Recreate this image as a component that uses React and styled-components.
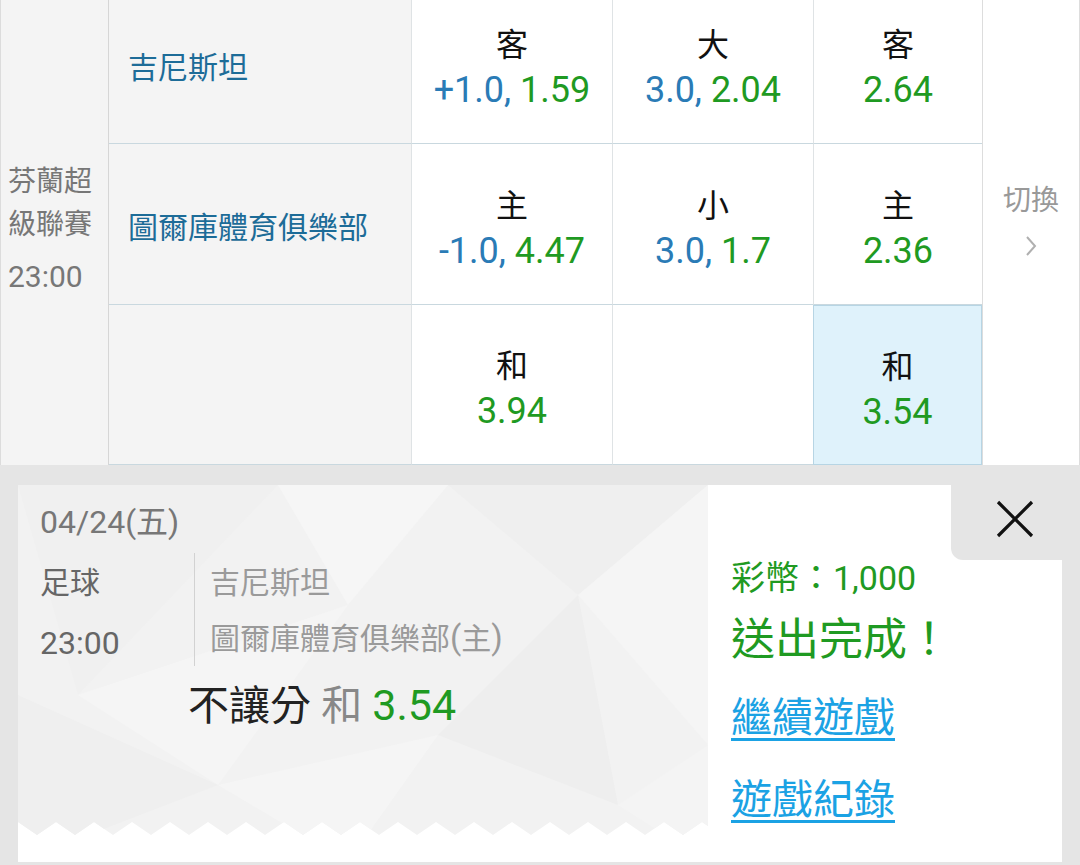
import styled, { createGlobalStyle } from 'styled-components';

const GlobalStyle = createGlobalStyle`
  html, body {
    margin: 0;
    padding: 0;
    background: #ffffff;
  }
  body {
    font-family: Roboto, "Noto Sans CJK TC", sans-serif;
  }
`;

const GREEN = '#1f9a22';
const HANDICAP_BLUE = '#2a7bb6';

const Screen = styled.div`
  display: flex;
  flex-direction: column;
  width: 1080px;
  height: 865px;
  overflow: hidden;
  background: #e5e5e5;
`;

// match list, scrolled a little so the first row is cut at the top
const Board = styled.div`
  height: 465px;
  flex-shrink: 0;
  overflow: hidden;
  background: #ffffff;
`;

const MatchRow = styled.div`
  display: flex;
  height: 481px;
  margin-top: -16px;
`;

const LeagueCol = styled.div`
  width: 109px;
  box-sizing: border-box;
  display: flex;
  flex-direction: column;
  justify-content: center;
  padding: 8px 0 0 7px;
  background: #f4f4f4;
  border-left: 1px solid #dcdcdc;
  border-right: 1px solid #d6d6d6;
  color: #777777;
  font-size: 28px;
`;

const LeagueLine = styled.div`
  line-height: 43px;
  margin-top: ${(p) => (p.$gap ? '9px' : '0')};
  font-size: ${(p) => (p.$gap ? '30px' : '28px')};
`;

const OddsGrid = styled.div`
  display: grid;
  grid-template-columns: 302px 201px 201px 169px;
  grid-template-rows: 160px 161px 160px;
`;

const TeamCell = styled.div`
  box-sizing: border-box;
  display: flex;
  align-items: center;
  padding: 2px 0 0 19px;
  background: #f4f4f4;
  border-bottom: 1px solid #c9d8df;
  color: #1d6c98;
  font-size: 30px;
`;

const OddsCell = styled.div`
  box-sizing: border-box;
  display: flex;
  flex-direction: column;
  align-items: center;
  justify-content: center;
  padding-top: 9px;
  background: ${(p) => (p.$picked ? '#dff2fb' : '#ffffff')};
  border-left: 1px solid ${(p) => (p.$picked ? '#b7d5e4' : '#dfe3e5')};
  border-right: ${(p) => (p.$picked ? '1px solid #b7d5e4' : 'none')};
  border-top: ${(p) => (p.$picked ? '1px solid #b7d5e4' : 'none')};
  border-bottom: 1px solid ${(p) => (p.$picked ? '#b7d5e4' : '#c9d8df')};
`;

const OddsLabel = styled.div`
  line-height: 44px;
  font-size: 32px;
  color: #111111;
`;

const OddsValue = styled.div`
  line-height: 46px;
  font-size: 36px;
  color: ${GREEN};
`;

const Handicap = styled.span`
  color: ${HANDICAP_BLUE};
`;

const SwitchCol = styled.div`
  flex: 1;
  box-sizing: border-box;
  display: flex;
  flex-direction: column;
  align-items: center;
  justify-content: center;
  padding-bottom: 12px;
  border-left: 1px solid #dddddd;
  border-right: 1px solid #dddddd;
  color: #999999;
  font-size: 28px;
`;

const SwitchText = styled.div`
  line-height: 40px;
`;

const Chevron = styled.svg`
  margin-top: 14px;
`;

// confirmation panel
const Footer = styled.div`
  flex: 1;
  display: flex;
  padding: 20px 18px 0 18px;
`;

const Slip = styled.div`
  display: flex;
  width: 100%;
  height: 377px;
`;

const SlipInfo = styled.div`
  position: relative;
  width: 690px;
  flex-shrink: 0;
  background: #ffffff;
`;

const SlipPattern = styled.svg`
  position: absolute;
  inset: 0;
`;

const SlipBody = styled.div`
  position: relative;
  padding: 17px 0 0 22px;
`;

const DateLine = styled.div`
  font-size: 32px;
  line-height: 40px;
  color: #777777;
`;

const InfoRow = styled.div`
  display: flex;
  margin-top: 11px;
`;

const SportCol = styled.div`
  width: 154px;
  color: #666666;
  font-size: 30px;
  line-height: 60px;
`;

const Clock = styled.div`
  font-size: 32px;
`;

const TeamsCol = styled.div`
  align-self: flex-start;
  padding: 2px 0 0 15px;
  border-left: 1px solid #d2d2d2;
  color: #9a9a9a;
  font-size: 30px;
  line-height: 55px;
`;

const Paren = styled.span`
  font-size: 33px;
`;

const BetLine = styled.div`
  margin: 7px 0 0 148px;
  font-size: 41px;
  line-height: 50px;
  color: #222222;
`;

const BetPart = styled.span`
  color: ${(p) => p.$color};
  font-size: ${(p) => p.$size || 'inherit'};
`;

const SlipActions = styled.div`
  flex: 1;
  display: flex;
  flex-direction: column;
  background: #ffffff;
`;

const TabRow = styled.div`
  display: flex;
  justify-content: flex-end;
`;

const CloseTab = styled.div`
  width: 111px;
  height: 75px;
  box-sizing: border-box;
  display: flex;
  align-items: center;
  justify-content: center;
  padding: 0 0 7px 17px;
  background: #e5e5e5;
  border-bottom-left-radius: 12px;
`;

const ActionBody = styled.div`
  padding-left: 23px;
`;

const Coins = styled.div`
  font-size: 34px;
  line-height: 36px;
  color: ${GREEN};
`;

const Done = styled.div`
  margin-top: 16px;
  font-size: 44px;
  line-height: 56px;
  color: ${GREEN};
`;

const ActionLink = styled.a`
  display: block;
  margin-top: ${(p) => p.$top}px;
  font-size: 41px;
  line-height: 56px;
  color: #1ba2e4;
  text-decoration: underline;
  text-decoration-thickness: 3px;
  text-underline-offset: 6px;
  cursor: pointer;
`;

const rows = [
  {
    team: '吉尼斯坦',
    cells: [
      { label: '客', line: '+1.0,', odds: '1.59' },
      { label: '大', line: '3.0,', odds: '2.04' },
      { label: '客', odds: '2.64' },
    ],
  },
  {
    team: '圖爾庫體育俱樂部',
    cells: [
      { label: '主', line: '-1.0,', odds: '4.47' },
      { label: '小', line: '3.0,', odds: '1.7' },
      { label: '主', odds: '2.36' },
    ],
  },
  {
    team: '',
    cells: [{ label: '和', odds: '3.94' }, null, { label: '和', odds: '3.54', picked: true }],
  },
];

// zigzag bottom edge of the ticket
const zigzag = () => {
  let d = 'M0,0 L0,337';
  for (let x = 0; x < 700; x += 38) {
    d += ` L${x + 19},350 L${x + 38},337`;
  }
  return d + ' L700,0 Z';
};

const shards = [
  { pts: '0,0 260,0 60,210', fill: '#f0f0f0' },
  { pts: '260,0 430,0 330,120', fill: '#f6f6f6' },
  { pts: '430,0 690,0 560,110', fill: '#efefef' },
  { pts: '560,110 690,0 690,260', fill: '#f5f5f5' },
  { pts: '60,210 330,120 200,300', fill: '#f5f5f5' },
  { pts: '0,210 200,300 0,377', fill: '#efefef' },
  { pts: '200,300 420,250 330,377', fill: '#f5f5f5' },
  { pts: '420,250 560,110 600,320', fill: '#eeeeee' },
  { pts: '600,320 690,260 690,377', fill: '#f4f4f4' },
];

const App = () => {
  return (
    <>
      <GlobalStyle />
      <Screen>
        <Board>
          <MatchRow>
            <LeagueCol>
              <LeagueLine>芬蘭超</LeagueLine>
              <LeagueLine>級聯賽</LeagueLine>
              <LeagueLine $gap>23:00</LeagueLine>
            </LeagueCol>
            <OddsGrid>
              {rows.map((row, i) => [
                <TeamCell key={`t${i}`}>{row.team}</TeamCell>,
                ...row.cells.map((c, j) => (
                  <OddsCell key={`c${i}${j}`} $picked={c?.picked}>
                    {c && <OddsLabel>{c.label}</OddsLabel>}
                    {c && (
                      <OddsValue>
                        {c.line && <Handicap>{c.line} </Handicap>}
                        {c.odds}
                      </OddsValue>
                    )}
                  </OddsCell>
                )),
              ])}
            </OddsGrid>
            <SwitchCol>
              <SwitchText>切換</SwitchText>
              <Chevron width="12" height="22" viewBox="0 0 12 22">
                <path d="M2 2 L10 11 L2 20" fill="none" stroke="#b0b0b0" strokeWidth="2" />
              </Chevron>
            </SwitchCol>
          </MatchRow>
        </Board>

        <Footer>
          <Slip>
            <SlipInfo>
              <SlipPattern width="690" height="377" viewBox="0 0 690 377">
                <defs>
                  <clipPath id="ticket">
                    <path d={zigzag()} />
                  </clipPath>
                </defs>
                <g clipPath="url(#ticket)">
                  <rect width="690" height="377" fill="#f2f2f2" />
                  {shards.map((s) => (
                    <polygon key={s.pts} points={s.pts} fill={s.fill} />
                  ))}
                </g>
              </SlipPattern>
              <SlipBody>
                <DateLine>04/24(五)</DateLine>
                <InfoRow>
                  <SportCol>
                    <div>足球</div>
                    <Clock>23:00</Clock>
                  </SportCol>
                  <TeamsCol>
                    <div>吉尼斯坦</div>
                    <div>
                      圖爾庫體育俱樂部<Paren>(</Paren>主<Paren>)</Paren>
                    </div>
                  </TeamsCol>
                </InfoRow>
                <BetLine>
                  不讓分 <BetPart $color="#888888">和</BetPart>{' '}
                  <BetPart $color={GREEN} $size="43px">3.54</BetPart>
                </BetLine>
              </SlipBody>
            </SlipInfo>

            <SlipActions>
              <TabRow>
                <CloseTab>
                  <svg width="38" height="38" viewBox="0 0 38 38">
                    <path d="M2 2 L36 36 M36 2 L2 36" stroke="#111111" strokeWidth="3.2" />
                  </svg>
                </CloseTab>
              </TabRow>
              <ActionBody>
                <Coins>彩幣：1,000</Coins>
                <Done>送出完成！</Done>
                <ActionLink $top={22}>繼續遊戲</ActionLink>
                <ActionLink $top={26}>遊戲紀錄</ActionLink>
              </ActionBody>
            </SlipActions>
          </Slip>
        </Footer>
      </Screen>
    </>
  );
};

export default App;
